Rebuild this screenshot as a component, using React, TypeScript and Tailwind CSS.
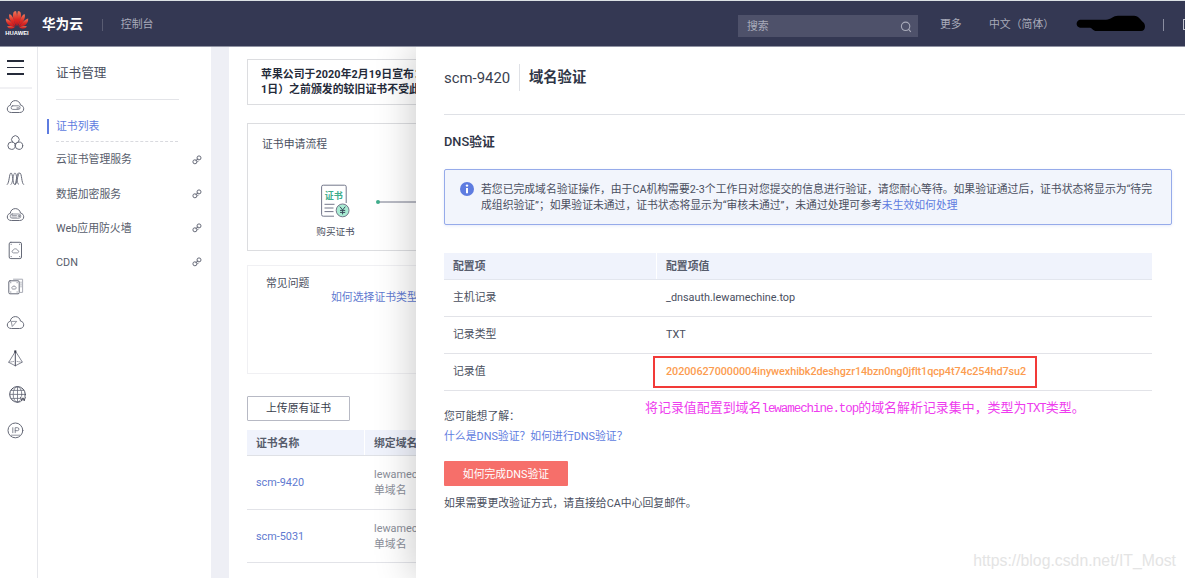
import React from "react";

const icon = {
  width: 19,
  height: 19,
  viewBox: "0 0 19 19",
  fill: "none",
  stroke: "#666a78",
  strokeWidth: 1,
  strokeLinejoin: "round" as const,
  strokeLinecap: "round" as const,
};

const CLOUD = "M5 15.5 C2.5 15.5 1.3 13.8 1.3 12 C1.3 10 2.7 8.6 4.3 8.3 C4.5 5.4 6.7 3.6 9.3 3.6 C12 3.6 14 5.3 14.5 8.1 C16.6 8.4 17.7 10 17.7 11.8 C17.7 14 16.2 15.5 14 15.5 Z";

const railIcons: React.ReactNode[] = [
  <svg {...icon}>
    <path d={CLOUD} />
    <rect x="5.2" y="8.8" width="8.8" height="3.6" rx="1.5" strokeWidth="0.8" />
    <path d="M11 11h1.6" />
  </svg>,
  <svg {...icon}>
    <path d="M6.7 9.3 A3.8 3.8 0 1 1 12 9.3" />
    <circle cx="5.6" cy="12.7" r="3.7" />
    <circle cx="13" cy="12.7" r="3.7" />
    <path d="M8.6 10.2 9.3 11.4 10 10.2" />
  </svg>,
  <svg {...icon}>
    <path d="M1.3 15.5 C3.4 14 3.2 4 5 4 C7 4 6.6 15.5 8.6 15.5 C10.6 15.5 10.2 4 12.2 4" />
    <path d="M5 15.5 C7.2 14 7 4 9 4 C11 4 10.6 15.5 12.6 15.5" strokeWidth="0.8" />
    <path d="M9.5 15.5 C11.5 13 11.6 4 13.8 4 C15.9 4 15.4 14.4 17.5 15.5" />
  </svg>,
  <svg {...icon}>
    <path d={CLOUD} />
    <rect x="4.2" y="9" width="10.6" height="4.2" rx="2" strokeWidth="0.7" />
    <path d="M6 10.5h4.5M6 12h4.5" strokeWidth="0.6" />
    <circle cx="12.8" cy="11.1" r="0.8" strokeWidth="0.7" />
  </svg>,
  <svg {...icon}>
    <rect x="3.2" y="1.3" width="12.3" height="16.3" rx="1.6" />
    <path d="M5 3.3h.4M13.4 3.3h.4M5 15.6h.4M13.4 15.6h.4" strokeWidth="0.8" />
    <path d="M7 11.8c-1.5-.4-1.3-2.3.2-2.5.3-1.9 3.8-2 4.3 0 1.6.2 1.7 2.1.3 2.5z" strokeWidth="0.7" />
  </svg>,
  <svg {...icon}>
    <path d="M7.5 2.2H16.6V15.4H14.4" stroke="#a9acb5" />
    <path d="M15 5v6" stroke="#a9acb5" strokeDasharray="1 1" />
    <rect x="2.8" y="3.8" width="10.4" height="13" rx="1.2" />
    <path d="M4.6 5.7h.3M11 5.7h.3M4.6 15h.3M11 15h.3" strokeWidth="0.8" />
    <path d="M6.3 11.9c-1-.5-.8-1.8.2-1.9.5-1.4 2.6-1.3 3 0 1 .1 1.1 1.5.1 1.9z" strokeWidth="0.7" />
  </svg>,
  <svg {...icon}>
    <path d={CLOUD} />
    <path d="M5.6 8.4H10.7L6.5 13.2z" strokeWidth="0.7" />
  </svg>,
  <svg {...icon}>
    <path d="M9.3 2.6 L2.7 13.3 L9.3 16.8 L16 13.3 Z" strokeWidth="0.8" />
    <path d="M9.3 2.6V16.8" stroke="#4a4e5e" />
    <path d="M2.7 13.3 L8 12.4M11 12.4 L16 13.3" strokeWidth="0.6" strokeDasharray="1 1" />
    <rect x="8.3" y="1.4" width="2" height="2.2" fill="#333747" stroke="none" />
  </svg>,
  <svg {...icon} className="ml-[3px]">
    <circle cx="9.5" cy="9.4" r="7.8" stroke="#4a4e5e" />
    <ellipse cx="9.5" cy="9.4" rx="4.3" ry="7.8" strokeWidth="0.8" />
    <path d="M9.5 1.6v15.6M1.8 9.4h15.4M3 5.4h13M3 13.4h9" strokeWidth="0.8" />
    <rect x="12.6" y="11.6" width="5" height="5" fill="#fff" stroke="none" />
    <path d="M12.6 12.2 13.7 15.8 15 12.8 16.2 15.8 17.3 12.2" stroke="#333747" strokeWidth="0.9" />
  </svg>,
  <svg {...icon}>
    <circle cx="9.4" cy="9.4" r="7.4" />
    <path d="M6.8 6.7v5M9.2 11.7v-5h2.2a1.5 1.5 0 0 1 0 3H9.2" strokeWidth="0.8" />
    <path d="M5.3 14.2h8.4" strokeWidth="0.7" />
  </svg>,
];

function LinkIcon() {
  return (
    <svg width="10" height="10" viewBox="0 0 10 10" fill="none" stroke="#666a78" strokeWidth="1">
      <circle cx="2.9" cy="6.8" r="2" />
      <circle cx="7" cy="2.9" r="2" />
      <path d="M3.6 5.6 6.2 3.8M5.2 7.2c.6-.3.8-.9.7-1.4" />
    </svg>
  );
}

function Logo() {
  return (
    <svg width="26" height="27" viewBox="0 0 26 27" className="shrink-0">
      <defs>
        <linearGradient id="petal" x1="0" y1="0" x2="0" y2="1">
          <stop offset="0" stopColor="#f0785a" />
          <stop offset="0.55" stopColor="#dc2a24" />
          <stop offset="1" stopColor="#c8161d" />
        </linearGradient>
      </defs>
      <g fill="url(#petal)">
        <path d="M12.6 16 C9 11 7.8 4 10.2 1.6 L12.1 1 C13.4 5 13.3 11 12.6 16Z" />
        <path d="M13.4 16 C17 11 18.2 4 15.8 1.6 L13.9 1 C12.7 5 12.7 11 13.4 16Z" />
        <path d="M11.6 16.4 C6.5 12.8 4.5 8 5.2 4.2 C8.4 4 10.6 11 11.6 16.4Z" />
        <path d="M14.4 16.4 C19.5 12.8 21.5 8 20.8 4.2 C17.6 4 15.4 11 14.4 16.4Z" />
        <path d="M11 17 C5.5 16.5 1.4 13.5 1.8 8.4 C5.5 9.2 9 13.5 11 17Z" />
        <path d="M15 17 C20.5 16.5 24.6 13.5 24.2 8.4 C20.5 9.2 17 13.5 15 17Z" />
        <path d="M10.8 17.6 C8 19.3 4.6 18.9 3.2 16.4 C6 16.2 8.8 16.7 10.8 17.6Z" />
        <path d="M15.2 17.6 C18 19.3 21.4 18.9 22.8 16.4 C20 16.2 17.2 16.7 15.2 17.6Z" />
      </g>
      <text x="13" y="25" textAnchor="middle" textLength="23.5" lengthAdjust="spacingAndGlyphs" fontSize="6" fontWeight="700" fill="#fff" fontFamily="Liberation Sans, sans-serif">HUAWEI</text>
    </svg>
  );
}

function Header() {
  return (
    <header className="flex h-[46px] shrink-0 items-center overflow-hidden border-b border-[#9093a3] bg-[#343853] pt-[2px] text-[#a9abba]">
      <div className="flex w-[738px] shrink-0 items-center">
        <div className="-mt-[3px] ml-1 h-[27px]"><Logo /></div>
        <span className="-mt-px ml-3 text-[13.6px] leading-5 font-bold text-white">华为云</span>
        <span className="ml-[19px] h-3 w-px bg-[#595c72]" />
        <span className="ml-[18px] pt-px">控制台</span>
      </div>
      <div className="mt-[3px] flex h-[22px] w-[180px] shrink-0 items-center justify-between bg-[#4e516a] pr-[6px] pl-[9px]">
        <span className="pt-[2px]">搜索</span>
        <svg width="12" height="12" viewBox="0 0 12 12" fill="none" stroke="#a9abba" strokeWidth="1.1" className="mt-0.5">
          <circle cx="5.6" cy="5.3" r="4.2" />
          <path d="M8.6 8.4 10.8 10.8" />
        </svg>
      </div>
      <span className="ml-[22px] w-[49px] shrink-0 pt-[2px]">更多</span>
      <span className="w-[87px] shrink-0 pt-[2px] whitespace-nowrap">中文（简体）</span>
      <svg width="70" height="18" viewBox="0 0 70 18" className="-mt-px shrink-0">
        <path d="M4 4.7H30C35 4.7 37 .8 42 .8H58C63 .8 64 5 68 8C70 11 69 16 65 16H21C16 16 17 13 14 12.7H4C-1 12 0 5 4 4.7Z" fill="#000" />
      </svg>
      <span className="ml-[17px] h-3 w-px shrink-0 bg-[#8a8da0]" />
      <span className="-mt-px ml-[19px] h-[11px] w-[12px] shrink-0 border border-[#c0c2ce]" />
    </header>
  );
}

function Rail() {
  return (
    <nav className="flex w-[38px] shrink-0 flex-col border-r border-[#e6e7eb]">
      <div className="mr-[5px] mb-[-1px] h-[42px] shrink-0 border-b-2 border-[#f1f1f4] pt-[13px] pl-[7px]">
        <div className="flex w-[17px] flex-col gap-[5px]">
          <span className="h-[1.5px] bg-[#252b3a]" />
          <span className="h-[1.5px] bg-[#252b3a]" />
          <span className="h-[1.5px] bg-[#252b3a]" />
        </div>
      </div>
      {railIcons.map((node, i) => (
        <div key={i} className="flex h-9 w-[31px] shrink-0 items-center justify-center">{node}</div>
      ))}
    </nav>
  );
}

function Menu() {
  return (
    <aside className="w-[173px] shrink-0 pt-[11px] text-[#575d6c]">
      <div className="ml-[18px] h-[42px] w-[123px] border-b border-[#e3e4e8] pt-[5px] text-[12.6px] leading-5 text-[#4a4f60]">证书管理</div>
      <div className="mt-[17px] ml-[9px] flex h-[18px] items-center">
        <span className="h-[15px] w-[2px] bg-[#5e7ce0]" />
        <span className="ml-[7px] pt-[2px] text-[#5e7ce0]">证书列表</span>
      </div>
      <div className="mt-[6px] ml-[18px] w-[122px] border-b border-dashed border-[#d9dadf]" />
      {["云证书管理服务", "数据加密服务", "Web应用防火墙", "CDN"].map((t) => (
        <div key={t} className="flex h-[34.1px] items-center justify-between pt-px pr-[9px] pl-[18px]">
          <span className="pt-[2px]">{t}</span>
          <LinkIcon />
        </div>
      ))}
    </aside>
  );
}

function Content() {
  return (
    <main className="w-[187px] shrink-0 overflow-hidden pt-3 pl-[18px] whitespace-nowrap">
      <div className="w-[900px]">
        <div className="h-[46px] border border-[#dcdde0] pt-[7px] pl-[13px] leading-[15px] font-bold tracking-[0.06px] text-[#252b3a]">
          苹果公司于2020年2月19日宣布：<br />1日）之前颁发的较旧证书不受此
        </div>
        <div className="mt-[18px] h-[128px] border border-[#dcdde0] pt-[13px] pl-[14px]">
          <div className="leading-4 text-[#4a4f60]">证书申请流程</div>
          <div className="mt-8 flex">
            <div className="ml-[54px] flex w-[39px] flex-col items-center">
              <svg width="30" height="34" viewBox="0 0 30 34" fill="none" className="-mt-px -ml-px">
                <path d="M14 32.2H3.3A1.6 1.6 0 0 1 1.6 30.6V2.8A1.6 1.6 0 0 1 3.3 1.2H24.5A1.6 1.6 0 0 1 26.2 2.8V19" stroke="#73778a" />
                <text x="13.8" y="15" textAnchor="middle" fontSize="9" fontWeight="700" fill="#40ad8c" fontFamily="Noto Sans CJK SC, sans-serif">证书</text>
                <path d="M4.5 20.3h10M4.5 24h9M4.5 27.6h9" stroke="#73778a" />
                <circle cx="22.6" cy="26.4" r="6.4" fill="#a9ecd3" stroke="#73778a" />
                <path d="M19.9 22.6 22.6 26 25.3 22.6M22.6 26V30.4M20 26.4h5.2M20 28.4h5.2" stroke="#3b4a5c" />
              </svg>
              <span className="mt-1.5 text-[9.6px] leading-4 text-[#4a4f60]">购买证书</span>
            </div>
            <svg width="60" height="10" viewBox="0 0 60 10" className="mt-[12px] ml-[20px]">
              <path d="M3 5H60" stroke="#73778a" />
              <circle cx="3" cy="5" r="2" fill="#40ad8c" />
            </svg>
          </div>
        </div>
        <div className="mt-[14px] h-[109px] border border-[#f0f0f3] pt-[10px] pl-[18px]">
          <div className="leading-4 text-[#4a4f60]">常见问题</div>
          <div className="-mt-0.5 ml-[65px] leading-4 text-[#6079d0]">如何选择证书类型</div>
        </div>
        <button className="mt-[22px] flex h-[25px] w-[103px] items-center justify-center rounded-[1px] border border-[#b7b9c4] pt-[2px] text-[#383d4c]">上传原有证书</button>
        <div className="mt-[9px] flex h-[26px] items-center border-b border-[#dfe1e6] bg-[#f0f3fc] font-bold text-[#575d6c]">
          <span className="flex h-full w-[118px] items-center border-r border-white pt-[3px] pl-[9px]">证书名称</span>
          <span className="pt-[3px] pl-[9px]">绑定域名</span>
        </div>
        {["scm-9420", "scm-5031"].map((n) => (
          <div key={n} className="flex h-[53.5px] items-center border-b border-[#e2e3e8] pt-[2px]">
            <span className="w-[127px] pl-[9px] text-[#6079d0]">{n}</span>
            <span className="leading-4 text-[#8a8e99]">lewamechine.top<br />单域名</span>
          </div>
        ))}
      </div>
    </main>
  );
}

function Drawer() {
  return (
    <section className="relative w-[769px] shrink-0 bg-white pl-[28px] text-[#4a4f60] shadow-[-4px_0_36px_rgba(0,0,0,0.2)]">
      <div className="flex h-[68px] items-center border-b border-[#dfe1e6] pb-1.5">
        <span className="w-[75px] pt-px text-[14.9px] text-[#3a3f4f]">scm-9420</span>
        <span className="h-[27px] w-px bg-[#dfe1e6]" />
        <span className="ml-[9px] text-[14.3px] font-bold text-[#2f3546]">域名验证</span>
      </div>
      <h2 className="mt-[17px] text-[12.8px] leading-5 font-medium text-[#2f3546]">DNS<span className="font-bold">验证</span></h2>
      <div className="mt-[17px] flex h-[56px] w-[728px] rounded-[2px] border border-[#96abea] bg-[#f2f5fc] pt-[12px] pl-[15px] shadow-[0_1px_3px_rgba(94,124,224,0.15)]">
        <svg width="14" height="14" viewBox="0 0 14 14" className="shrink-0">
          <circle cx="7" cy="7" r="7" fill="#5e7ce0" />
          <circle cx="7" cy="3.6" r="1.2" fill="#fff" />
          <path d="M7 6V11.3" stroke="#fff" strokeWidth="2" />
        </svg>
        <p className="ml-[7px] text-[10.82px] leading-4 whitespace-nowrap">
          若您已完成域名验证操作，由于CA机构需要2-3个工作日对您提交的信息进行验证，请您耐心等待。如果验证通过后，证书状态将显示为“待完<br />
          成组织验证”；如果验证未通过，证书状态将显示为“审核未通过”，未通过处理可参考<span className="text-[#5e7ce0]">未生效如何处理</span>
        </p>
      </div>
      <div className="mt-[28px] w-[708px]">
        <div className="flex h-[27px] items-center border-b border-[#e3e6ee] bg-[#f0f3fc] font-bold text-[#575d6c]">
          <span className="flex h-full w-[213px] items-center border-r border-white pt-[2px] pl-[9px]">配置项</span>
          <span className="pt-[2px] pl-[9px]">配置项值</span>
        </div>
        {[
          ["主机记录", "_dnsauth.lewamechine.top"],
          ["记录类型", "TXT"],
        ].map(([k, v]) => (
          <div key={k} className="flex h-[37px] items-center border-b border-[#e2e3e8]">
            <span className="w-[222px] pl-[9px]">{k}</span>
            <span>{v}</span>
          </div>
        ))}
        <div className="flex h-[37px] items-center border-b border-[#e2e3e8]">
          <span className="w-[209px] pt-px pl-[9px]">记录值</span>
          <span className="flex h-[32px] w-[384px] items-center border-2 border-[#f23a38] pt-px pl-[11px] font-medium tracking-[-0.08px] text-[#fc9c50]">
            202006270000004inywexhibk2deshgzr14bzn0ng0jflt1qcp4t74c254hd7su2
          </span>
        </div>
      </div>
      <div className="flex h-[36px]">
        <div className="w-[201px] pt-[17px] leading-[18px]">您可能想了解：</div>
        <div className="pt-[8px] text-[12.95px] leading-[18px] whitespace-nowrap text-[#ee3cee]">
          将记录值配置到域名<Mono>lewamechine.top</Mono>的域名解析记录集中，类型为<Mono>TXT</Mono>类型。
        </div>
      </div>
      <div className="mt-px leading-[18px] text-[#5e7ce0]">什么是DNS验证？如何进行DNS验证？</div>
      <button className="mt-[15px] flex h-[25px] w-[124px] items-center justify-center rounded-[1px] bg-[#f66f6a] pt-[3px] text-white">如何完成DNS验证</button>
      <div className="mt-[9px] leading-[18px]">如果需要更改验证方式，请直接给CA中心回复邮件。</div>
      <div className="absolute right-[9px] bottom-[7px] font-['Liberation_Sans',sans-serif] text-[15.8px] leading-5 text-[#e4e4e4]">https://blog.csdn.net/IT_Most</div>
    </section>
  );
}

function Mono({ children }: { children: React.ReactNode }) {
  return <span className="font-['Liberation_Mono',monospace] text-[12.5px] leading-none tracking-[-1.05px]">{children}</span>;
}

export default function App() {
  return (
    <div className="flex h-[578px] w-[1185px] flex-col overflow-hidden border-t border-[#dbe1e4] bg-white font-[Roboto,'Noto_Sans_CJK_SC',sans-serif] text-[10.85px]">
      <Header />
      <div className="flex min-h-0 flex-1 overflow-hidden">
        <Rail />
        <Menu />
        <div className="w-[18px] shrink-0 bg-[#eeeff5]" />
        <Content />
        <Drawer />
      </div>
    </div>
  );
}
